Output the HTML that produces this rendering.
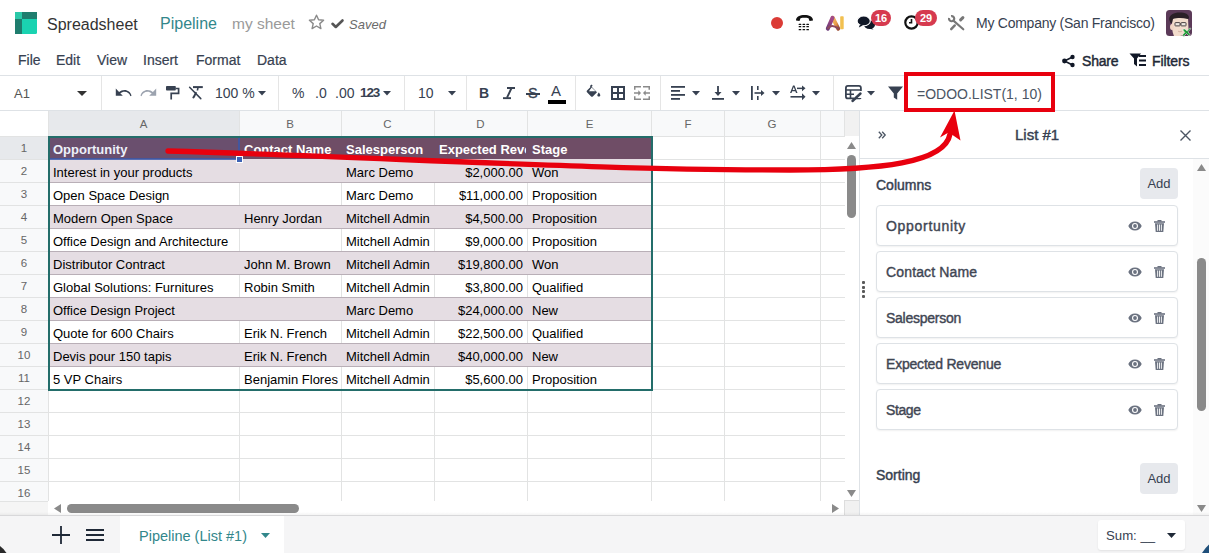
<!DOCTYPE html>
<html><head><meta charset="utf-8">
<style>
*{box-sizing:border-box;margin:0;padding:0}
html,body{width:1209px;height:553px;overflow:hidden;background:#fff;font-family:"Liberation Sans",sans-serif;color:#374151}
.a{position:absolute;white-space:nowrap}
svg{position:absolute;overflow:visible}
/* grid */
#grid{position:absolute;left:0;top:110px;width:860px;height:404px;overflow:hidden;background:#fff}
.ch{position:absolute;top:0;height:26px;background:#f8f9fa;border-right:1px solid #e2e3e3;border-bottom:1px solid #e2e3e3;font-size:12px;color:#666;text-align:center;line-height:26px}
.rh{position:absolute;left:0;width:48px;height:23px;background:#f8f9fa;border-bottom:1px solid #e2e3e3;border-right:1px solid #e2e3e3;font-size:12px;color:#666;text-align:center;line-height:22px}
.row{position:absolute;left:48px;height:23px;width:800px}
.c{position:absolute;top:0;height:23px;border-right:1px solid #e2e3e3;border-bottom:1px solid #e2e3e3;font-size:13px;color:#000;line-height:23px;padding-left:4px;overflow:hidden;white-space:nowrap}
.r{text-align:right;padding-right:4px;padding-left:0}
.hd .c{background:#6e4c65;color:#fff;font-weight:bold;border-right-color:#6e4c65;border-bottom-color:#6e4c65}
.st .c{background:#e5dce2;border-bottom-color:#a89aa5;border-right-color:#e5dce2}
.wt .c{background:#fff;border-bottom-color:#a89aa5}
.panelcard{position:absolute;left:876px;width:302px;height:41px;border:1px solid #dee2e6;border-radius:4px;background:#fff;box-shadow:0 1px 1px rgba(0,0,0,.05)}
.panelcard .t{position:absolute;left:10px;top:0;line-height:40px;font-size:14px;font-weight:bold;color:#374151}
</style></head>
<body>

<!-- ===== NAVBAR ===== -->
<svg style="left:15px;top:12px" width="22" height="22" viewBox="0 0 22 22">
  <rect x="0" y="0" width="22" height="22" rx="1.5" fill="#1ad3b1"/>
  <rect x="7" y="0" width="15" height="7" fill="#1f7d6e"/>
  <rect x="0" y="7" width="7" height="15" fill="#1f7d6e"/>
  <rect x="0" y="0" width="7" height="7" fill="#2bc8a8"/>
</svg>
<div class="a" style="left:47px;top:15px;font-size:16px;color:#333;line-height:20px">Spreadsheet</div>
<div class="a" style="left:160px;top:14px;font-size:16px;color:#32878b;line-height:20px">Pipeline</div>
<div class="a" style="left:232px;top:14px;font-size:15.5px;color:#9a9a9a;line-height:20px">my sheet</div>
<svg style="left:308px;top:14px" width="17" height="16" viewBox="0 0 17 16"><path d="M8.5 1.2 L10.6 5.8 L15.6 6.3 L11.8 9.6 L12.9 14.6 L8.5 12 L4.1 14.6 L5.2 9.6 L1.4 6.3 L6.4 5.8 Z" fill="none" stroke="#8a8a8a" stroke-width="1.4" stroke-linejoin="round"/></svg>
<svg style="left:331px;top:19px" width="13" height="10" viewBox="0 0 13 10"><path d="M1.5 4.8 L4.8 8 L11.5 1.5" fill="none" stroke="#555" stroke-width="2.6" stroke-linecap="round" stroke-linejoin="round"/></svg>
<div class="a" style="left:349px;top:16px;font-size:13px;font-style:italic;color:#6b6b6b;line-height:18px">Saved</div>

<!-- right icons -->
<svg style="left:771px;top:17px" width="12" height="12"><circle cx="6" cy="6" r="6" fill="#db3b36"/></svg>
<svg style="left:795px;top:14px" width="19" height="17" viewBox="0 0 19 17">
  <path d="M1 6.5 C1 2.5 5 1 9.5 1 C14 1 18 2.5 18 6.5 L14.5 7 L13.5 4.2 C11 3.6 8 3.6 5.5 4.2 L4.5 7 Z" fill="#111"/>
  <g fill="#111"><rect x="3.6" y="9.7" width="2.7" height="1.3" rx="0.5"/><rect x="7.5" y="9.7" width="2.7" height="1.3" rx="0.5"/><rect x="11.3" y="9.7" width="2.7" height="1.3" rx="0.5"/><rect x="3.6" y="11.9" width="2.7" height="1.3" rx="0.5"/><rect x="7.5" y="11.9" width="2.7" height="1.3" rx="0.5"/><rect x="11.3" y="11.9" width="2.7" height="1.3" rx="0.5"/><rect x="3.6" y="14.9" width="2.7" height="1.3" rx="0.5"/><rect x="7.5" y="14.9" width="2.7" height="1.3" rx="0.5"/><rect x="11.3" y="14.9" width="2.7" height="1.3" rx="0.5"/></g>
</svg>
<svg style="left:822px;top:12px" width="26" height="22" viewBox="0 0 26 22">
  <defs><linearGradient id="ag1" x1="0" y1="1" x2="0.3" y2="0"><stop offset="0" stop-color="#6b3a7a"/><stop offset="1" stop-color="#a24a86"/></linearGradient>
  <linearGradient id="ag2" x1="0" y1="0" x2="1" y2="1"><stop offset="0" stop-color="#f5c060"/><stop offset="0.6" stop-color="#e89a48"/><stop offset="1" stop-color="#9a4a30"/></linearGradient></defs>
  <path d="M10.8 5.8 L16.2 16.6" stroke="url(#ag2)" stroke-width="4" stroke-linecap="round"/>
  <path d="M5.8 16.6 L10.5 5.8" stroke="url(#ag1)" stroke-width="4" stroke-linecap="round"/>
  <path d="M6 16.2 C8 13.5 12 13.5 16 16.4" fill="none" stroke="#8d4a5e" stroke-width="2.2" stroke-linecap="round"/>
  <rect x="18.2" y="4.3" width="3.5" height="13" rx="0.8" fill="#f2c050"/>
</svg>
<svg style="left:852px;top:10px" width="28" height="24" viewBox="0 0 28 24">
  <ellipse cx="17.5" cy="14.8" rx="5.6" ry="4.2" fill="#111827"/>
  <path d="M19 17.5 L21.5 19.6 L17 18.8Z" fill="#111827"/>
  <ellipse cx="11.7" cy="10.9" rx="6.6" ry="4.9" fill="#111827" stroke="#fff" stroke-width="1.1"/>
  <path d="M8 14.5 L6.8 17.5 L11 15.3Z" fill="#111827"/>
</svg>
<div class="a" style="left:871px;top:10px;width:20px;height:16px;border-radius:8px;background:#d63a4f;color:#fff;font-size:11px;font-weight:bold;text-align:center;line-height:16px">16</div>
<svg style="left:904px;top:15px" width="15" height="15" viewBox="0 0 15 15"><circle cx="7.5" cy="7.5" r="6.2" fill="none" stroke="#111" stroke-width="2.2"/><path d="M7.5 4v3.8H5" fill="none" stroke="#111" stroke-width="1.6"/></svg>
<div class="a" style="left:915px;top:10px;width:22px;height:16px;border-radius:8px;background:#d63a4f;color:#fff;font-size:11px;font-weight:bold;text-align:center;line-height:16px">29</div>
<svg style="left:944px;top:10px" width="26" height="24" viewBox="0 0 26 24">
  <path d="M9.4 10.6 L19.3 19.3" stroke="#777" stroke-width="2.1" stroke-linecap="round"/>
  <path d="M7.1 6.1 A2.6 2.6 0 1 1 5.1 8" fill="none" stroke="#777" stroke-width="2.2"/>
  <path d="M18.9 7.6 L16.6 9.9" stroke="#777" stroke-width="3" stroke-linecap="round"/>
    <path d="M10.8 15.4 L7.2 19.2" stroke="#777" stroke-width="2.4" stroke-linecap="round"/>
</svg>
<div class="a" style="left:976px;top:14px;font-size:14px;letter-spacing:-0.25px;color:#374151;line-height:18px">My Company (San Francisco)</div>
<svg style="left:1166px;top:10px" width="26" height="26" viewBox="0 0 26 26">
  <rect width="26" height="26" rx="3.5" fill="#5b3a58"/>
  <path d="M6.5 8 C11 6.5 18 6.5 22 8 L22.5 19 C21 24.5 16 26 12.5 26 L8 26 C6 22 5.5 15 6.5 8 Z" fill="#f2dccc"/>
  <ellipse cx="6" cy="17" rx="2" ry="3" fill="#f0d4c4"/>
  <path d="M3.2 9.5 C3 4.5 8 2.4 13.5 2.4 C19 2.4 23.5 4 23 8.5 L21.5 9 C17 7.6 11 7.6 7 9 L6 13 L4.5 13 Z" fill="#2a2027"/>
  <rect x="9" y="12.6" width="5" height="3.3" rx="0.5" fill="#eee8e2" stroke="#4a4244" stroke-width="1"/>
  <rect x="15" y="12.6" width="5" height="3.3" rx="0.5" fill="#eee8e2" stroke="#4a4244" stroke-width="1"/>
  <path d="M14 14 H15" stroke="#4a4244" stroke-width="1"/>
  <path d="M12 21 C13 22 15 22 16 21" stroke="#c9a595" stroke-width="0.8" fill="none"/>
  <path d="M16.5 19.5 L18.8 19 L21 21 L23.5 18.2 C24.3 17.6 25 18.2 24.6 19 L22 21.8 L24 24.5 L23 26 L20.5 23.5 L18.5 25.5 L18.5 26.5 L17 26.5 L16.8 24.5 L18.8 22.5Z" fill="#1c9a35" stroke="#fff" stroke-width="0.5"/>
</svg>

<!-- ===== MENU ROW ===== -->
<div class="a" style="left:18px;top:52px;font-size:14px;color:#374151;line-height:16px;-webkit-text-stroke:0.2px #374151">File</div>
<div class="a" style="left:56px;top:52px;font-size:14px;color:#374151;line-height:16px;-webkit-text-stroke:0.2px #374151">Edit</div>
<div class="a" style="left:97px;top:52px;font-size:14px;color:#374151;line-height:16px;-webkit-text-stroke:0.2px #374151">View</div>
<div class="a" style="left:143px;top:52px;font-size:14px;color:#374151;line-height:16px;-webkit-text-stroke:0.2px #374151">Insert</div>
<div class="a" style="left:196px;top:52px;font-size:14px;color:#374151;line-height:16px;-webkit-text-stroke:0.2px #374151">Format</div>
<div class="a" style="left:257px;top:52px;font-size:14px;color:#374151;line-height:16px;-webkit-text-stroke:0.2px #374151">Data</div>

<svg style="left:1062px;top:55px" width="13" height="12" viewBox="0 0 13 12"><circle cx="10.5" cy="2" r="2.2" fill="#111827"/><circle cx="10.5" cy="10" r="2.2" fill="#111827"/><circle cx="2.5" cy="6" r="2.4" fill="#111827"/><path d="M10.5 2L2.5 6L10.5 10" stroke="#111827" stroke-width="1.6" fill="none"/></svg>
<div class="a" style="left:1082px;top:53px;font-size:14px;color:#1f2937;-webkit-text-stroke:0.45px #1f2937;letter-spacing:-0.2px;line-height:16px">Share</div>
<svg style="left:1129px;top:53px" width="18" height="14" viewBox="0 0 18 14"><path d="M0.5 0.5H12L8 5.5V13.5L5 11V5.5Z" fill="#111827"/><rect x="10" y="2" width="7" height="2" fill="#111827"/><rect x="10" y="6.5" width="7" height="2" fill="#111827"/><rect x="10" y="11" width="7" height="2" fill="#111827"/></svg>
<div class="a" style="left:1152px;top:53px;font-size:14px;color:#1f2937;-webkit-text-stroke:0.45px #1f2937;letter-spacing:-0.1px;line-height:16px">Filters</div>

<!-- ===== TOOLBAR ===== -->
<div class="a" style="left:0;top:75px;width:1209px;height:1px;background:#dee2e6"></div>
<div class="a" style="left:0;top:110px;width:1209px;height:1px;background:#dee2e6"></div>
<div class="a" style="left:14px;top:86px;font-size:13px;color:#555;line-height:16px">A1</div>
<svg style="left:77px;top:91px" width="10" height="5"><path d="M0 0H10L5 5Z" fill="#333"/></svg>
<div class="a" style="left:101px;top:76px;width:1px;height:34px;background:#e5e5e5"></div>


<!-- undo/redo/paint/clear -->
<svg style="left:115px;top:88px" width="17" height="9" viewBox="0 0 17 9"><path d="M0.8 0.5 V7.8 H7.8 L5.3 5.3 C6.5 4.3 8 3.7 9.6 3.7 C12.3 3.7 14.6 5.4 15.4 8.2 L16.6 7.6 C15.6 4.1 12.8 1.9 9.6 1.9 C7.4 1.9 5.5 2.7 4.1 4.1 Z" fill="#374151"/></svg>
<svg style="left:140px;top:88px" width="17" height="9" viewBox="0 0 17 9"><g transform="translate(17,0) scale(-1,1)"><path d="M0.8 0.5 V7.8 H7.8 L5.3 5.3 C6.5 4.3 8 3.7 9.6 3.7 C12.3 3.7 14.6 5.4 15.4 8.2 L16.6 7.6 C15.6 4.1 12.8 1.9 9.6 1.9 C7.4 1.9 5.5 2.7 4.1 4.1 Z" fill="#9ca3af"/></g></svg>
<svg style="left:166px;top:86px" width="14" height="14" viewBox="0 0 14 14"><rect x="0" y="0" width="9.8" height="4.6" rx="0.8" fill="#374151"/><path d="M9.6 2.5 H12.6 V7.4 H5.2 V13.6" fill="none" stroke="#374151" stroke-width="1.7"/></svg>
<svg style="left:189px;top:86px" width="14" height="14" viewBox="0 0 14 14"><rect x="4" y="0.1" width="9.8" height="2" fill="#374151"/><path d="M8.1 2 H9.7 L9.2 4.5 H7.6Z" fill="#374151"/><path d="M6.9 6.8 L5.6 9.5 Q4.9 11 4.3 11.5" fill="none" stroke="#374151" stroke-width="1.9" stroke-linecap="round"/><path d="M0.6 1.2 L11.8 12.6" stroke="#374151" stroke-width="1.5" stroke-linecap="round"/></svg>
<div class="a" style="left:215px;top:85px;font-size:14px;color:#374151;line-height:16px">100 %</div>
<svg style="left:258px;top:91px" width="8" height="4.5" viewBox="0 0 8 4.5"><path d="M0 0H8L4 4.5Z" fill="#374151"/></svg>
<div class="a" style="left:278px;top:76px;width:1px;height:34px;background:#e5e5e5"></div>

<div class="a" style="left:292px;top:85px;font-size:14px;color:#374151;line-height:16px">%</div>
<div class="a" style="left:315px;top:85px;font-size:14px;color:#374151;line-height:16px">.0</div>
<div class="a" style="left:335px;top:85px;font-size:14px;color:#374151;line-height:16px">.00</div>
<div class="a" style="left:360px;top:85px;font-size:13.5px;font-weight:bold;color:#374151;line-height:16px;letter-spacing:-1.1px">123</div>
<svg style="left:383px;top:91px" width="8" height="4.5" viewBox="0 0 8 4.5"><path d="M0 0H8L4 4.5Z" fill="#374151"/></svg>
<div class="a" style="left:404px;top:76px;width:1px;height:34px;background:#e5e5e5"></div>
<div class="a" style="left:418px;top:85px;font-size:14px;color:#374151;line-height:16px">10</div>
<svg style="left:448px;top:91px" width="8" height="4.5" viewBox="0 0 8 4.5"><path d="M0 0H8L4 4.5Z" fill="#374151"/></svg>
<div class="a" style="left:466px;top:76px;width:1px;height:34px;background:#e5e5e5"></div>

<div class="a" style="left:479px;top:85px;font-size:14px;font-weight:bold;color:#374151;line-height:16px">B</div>
<svg style="left:502px;top:86px" width="14" height="14" viewBox="0 0 14 14"><rect x="5" y="1" width="8" height="2" fill="#374151"/><rect x="1" y="11.2" width="8" height="1.9" fill="#374151"/><path d="M9.3 2.5 L5 11.6" stroke="#374151" stroke-width="1.9"/></svg>
<div class="a" style="left:528px;top:85px;font-size:14.5px;color:#374151;line-height:16px;-webkit-text-stroke:0.3px #374151">S</div>
<div class="a" style="left:526px;top:93px;width:14px;height:1.8px;background:#374151"></div>
<div class="a" style="left:551px;top:83px;font-size:15px;color:#374151;line-height:16px">A</div>
<div class="a" style="left:548px;top:100px;width:18px;height:4px;background:#000"></div>
<div class="a" style="left:575px;top:76px;width:1px;height:34px;background:#e5e5e5"></div>

<svg style="left:586px;top:84px" width="15" height="13" viewBox="0 0 15 13"><path d="M5.5 0.5 L6.7 1.7 L5.6 2.8 L11 8.2 L6.8 12.4 C6.3 12.9 5.6 12.9 5.1 12.4 L1 8.3 C0.5 7.8 0.5 7.1 1 6.6 L4.5 3.1 L3.9 2.1 Z M3 7.3 H9.6 L5.6 3.6 Z" fill="#374151" fill-rule="evenodd"/><path d="M12.8 8.5 C12.8 8.5 11.3 10.3 11.3 11.2 C11.3 12 12 12.6 12.8 12.6 C13.6 12.6 14.3 12 14.3 11.2 C14.3 10.3 12.8 8.5 12.8 8.5Z" fill="#374151"/></svg>
<svg style="left:611px;top:86px" width="14" height="14" viewBox="0 0 14 14"><rect x="1" y="1" width="12" height="12" fill="none" stroke="#374151" stroke-width="2"/><path d="M7 1V13M1 7H13" stroke="#374151" stroke-width="2"/></svg>
<svg style="left:634px;top:86px" width="16" height="14" viewBox="0 0 16 14"><g fill="none" stroke="#8a8a8a" stroke-width="1.5"><path d="M0.75 3.8V0.75H7M9 0.75H15.25V3.8M0.75 10.2V13.25H7M9 13.25H15.25V10.2M0 7H5M16 7H11"/></g><path d="M4.3 4.3L7 7L4.3 9.7Z M11.7 4.3L9 7L11.7 9.7Z" fill="#8a8a8a"/></svg>
<div class="a" style="left:660px;top:76px;width:1px;height:34px;background:#e5e5e5"></div>

<svg style="left:671px;top:86px" width="14" height="14" viewBox="0 0 14 14" fill="#374151"><rect x="0" y="0" width="14" height="1.8"/><rect x="0" y="4" width="9" height="1.8"/><rect x="0" y="8" width="14" height="1.8"/><rect x="0" y="12" width="9" height="1.8"/></svg>
<svg style="left:692px;top:91px" width="8" height="4.5" viewBox="0 0 8 4.5"><path d="M0 0H8L4 4.5Z" fill="#374151"/></svg>
<svg style="left:712px;top:86px" width="12" height="14" viewBox="0 0 12 14" fill="#374151"><rect x="5.1" y="0" width="1.8" height="7"/><path d="M2.5 6H9.5L6 10Z"/><rect x="0" y="12" width="12" height="1.8"/></svg>
<svg style="left:732px;top:91px" width="8" height="4.5" viewBox="0 0 8 4.5"><path d="M0 0H8L4 4.5Z" fill="#374151"/></svg>
<svg style="left:751px;top:86px" width="14" height="14" viewBox="0 0 14 14" fill="#374151"><rect x="0" y="0" width="1.8" height="14"/><rect x="6" y="0" width="1.6" height="4"/><rect x="6" y="10" width="1.6" height="4"/><rect x="3.5" y="6.2" width="7" height="1.6"/><path d="M10 4L13.5 7L10 10Z"/></svg>
<svg style="left:772px;top:91px" width="8" height="4.5" viewBox="0 0 8 4.5"><path d="M0 0H8L4 4.5Z" fill="#374151"/></svg>
<svg style="left:790px;top:85px" width="16" height="15" viewBox="0 0 16 15" fill="#374151"><path d="M3 0.5 H4.5 L7.5 8 H6 L5.3 6.2 H2.2 L1.5 8 H0 Z M2.6 5 H4.9 L3.75 2Z"/><rect x="7" y="2.6" width="6" height="1.5"/><path d="M12 0.5 L15.5 3.35 L12 6.2Z"/><rect x="0.5" y="11" width="12" height="1.6"/><path d="M12 8.3 L15.5 11.8 L12 15.2Z"/></svg>
<svg style="left:812px;top:91px" width="8" height="4.5" viewBox="0 0 8 4.5"><path d="M0 0H8L4 4.5Z" fill="#374151"/></svg>
<div class="a" style="left:833px;top:76px;width:1px;height:34px;background:#e5e5e5"></div>

<svg style="left:845px;top:85px" width="17" height="17" viewBox="0 0 17 17"><rect x="0.9" y="0.9" width="15" height="12.5" rx="2" fill="none" stroke="#374151" stroke-width="1.8"/><path d="M1 5H16M5.5 5V13.4M1 9.2H10" stroke="#374151" stroke-width="1.6"/><rect x="9" y="6" width="8" height="7" fill="#fff"/><path d="M7.5 16 L15.5 8.5" stroke="#374151" stroke-width="2.4" stroke-linecap="round"/></svg>
<svg style="left:867px;top:91px" width="8" height="4.5" viewBox="0 0 8 4.5"><path d="M0 0H8L4 4.5Z" fill="#374151"/></svg>
<svg style="left:888px;top:86px" width="15" height="14" viewBox="0 0 15 14"><path d="M0 0.5H15L9.2 7.5V13.8L5.8 11.5V7.5Z" fill="#374151"/></svg>
<div class="a" style="left:917px;top:86px;font-size:14px;color:#4b5563;line-height:16px">=ODOO.LIST(1, 10)</div>

<!-- GRID -->
<div class="a" style="left:0;top:111px;width:48px;height:25px;background:#fff"></div>
<div class="a" style="left:48px;top:111px;width:191px;height:25px;background:#e7e9ec;font-size:11.5px;color:#666;text-align:center;line-height:26px">A</div>
<div class="a" style="left:239px;top:111px;width:102px;height:25px;background:#f8f9fa;font-size:11.5px;color:#666;text-align:center;line-height:26px">B</div>
<div class="a" style="left:341px;top:111px;width:93px;height:25px;background:#f8f9fa;font-size:11.5px;color:#666;text-align:center;line-height:26px">C</div>
<div class="a" style="left:434px;top:111px;width:93px;height:25px;background:#f8f9fa;font-size:11.5px;color:#666;text-align:center;line-height:26px">D</div>
<div class="a" style="left:527px;top:111px;width:125px;height:25px;background:#f8f9fa;font-size:11.5px;color:#666;text-align:center;line-height:26px">E</div>
<div class="a" style="left:652px;top:111px;width:72px;height:25px;background:#f8f9fa;font-size:11.5px;color:#666;text-align:center;line-height:26px">F</div>
<div class="a" style="left:724px;top:111px;width:96px;height:25px;background:#f8f9fa;font-size:11.5px;color:#666;text-align:center;line-height:26px">G</div>
<div class="a" style="left:820px;top:111px;width:25px;height:25px;background:#f8f9fa;font-size:11.5px;color:#666;text-align:center;line-height:26px"></div>
<div class="a" style="left:0;top:137px;width:48px;height:22px;background:#e7e9ec;font-size:11.5px;color:#666;text-align:center;line-height:22px">1</div>
<div class="a" style="left:0;top:160px;width:48px;height:22px;background:#f8f9fa;font-size:11.5px;color:#666;text-align:center;line-height:22px">2</div>
<div class="a" style="left:0;top:183px;width:48px;height:22px;background:#f8f9fa;font-size:11.5px;color:#666;text-align:center;line-height:22px">3</div>
<div class="a" style="left:0;top:206px;width:48px;height:22px;background:#f8f9fa;font-size:11.5px;color:#666;text-align:center;line-height:22px">4</div>
<div class="a" style="left:0;top:229px;width:48px;height:22px;background:#f8f9fa;font-size:11.5px;color:#666;text-align:center;line-height:22px">5</div>
<div class="a" style="left:0;top:252px;width:48px;height:22px;background:#f8f9fa;font-size:11.5px;color:#666;text-align:center;line-height:22px">6</div>
<div class="a" style="left:0;top:275px;width:48px;height:22px;background:#f8f9fa;font-size:11.5px;color:#666;text-align:center;line-height:22px">7</div>
<div class="a" style="left:0;top:298px;width:48px;height:22px;background:#f8f9fa;font-size:11.5px;color:#666;text-align:center;line-height:22px">8</div>
<div class="a" style="left:0;top:321px;width:48px;height:22px;background:#f8f9fa;font-size:11.5px;color:#666;text-align:center;line-height:22px">9</div>
<div class="a" style="left:0;top:344px;width:48px;height:22px;background:#f8f9fa;font-size:11.5px;color:#666;text-align:center;line-height:22px">10</div>
<div class="a" style="left:0;top:367px;width:48px;height:22px;background:#f8f9fa;font-size:11.5px;color:#666;text-align:center;line-height:22px">11</div>
<div class="a" style="left:0;top:390px;width:48px;height:22px;background:#f8f9fa;font-size:11.5px;color:#666;text-align:center;line-height:22px">12</div>
<div class="a" style="left:0;top:413px;width:48px;height:22px;background:#f8f9fa;font-size:11.5px;color:#666;text-align:center;line-height:22px">13</div>
<div class="a" style="left:0;top:436px;width:48px;height:22px;background:#f8f9fa;font-size:11.5px;color:#666;text-align:center;line-height:22px">14</div>
<div class="a" style="left:0;top:459px;width:48px;height:22px;background:#f8f9fa;font-size:11.5px;color:#666;text-align:center;line-height:22px">15</div>
<div class="a" style="left:0;top:482px;width:48px;height:22px;background:#f8f9fa;font-size:11.5px;color:#666;text-align:center;line-height:22px">16</div>
<div class="a" style="left:48px;top:136px;width:604px;height:23px;background:#6f4d66"></div>
<div class="a" style="left:48px;top:159px;width:604px;height:23px;background:#e5dde3"></div>
<div class="a" style="left:48px;top:205px;width:604px;height:23px;background:#e5dde3"></div>
<div class="a" style="left:48px;top:251px;width:604px;height:23px;background:#e5dde3"></div>
<div class="a" style="left:48px;top:297px;width:604px;height:23px;background:#e5dde3"></div>
<div class="a" style="left:48px;top:343px;width:604px;height:23px;background:#e5dde3"></div>
<div class="a" style="left:48px;top:111px;width:1px;height:390px;background:#e2e3e3"></div>
<div class="a" style="left:239px;top:111px;width:1px;height:25px;background:#e2e3e3"></div>
<div class="a" style="left:239px;top:390px;width:1px;height:111px;background:#e2e3e3"></div>
<div class="a" style="left:239px;top:182px;width:1px;height:23px;background:#e2e3e3"></div>
<div class="a" style="left:239px;top:228px;width:1px;height:23px;background:#e2e3e3"></div>
<div class="a" style="left:239px;top:274px;width:1px;height:23px;background:#e2e3e3"></div>
<div class="a" style="left:239px;top:320px;width:1px;height:23px;background:#e2e3e3"></div>
<div class="a" style="left:239px;top:366px;width:1px;height:23px;background:#e2e3e3"></div>
<div class="a" style="left:341px;top:111px;width:1px;height:25px;background:#e2e3e3"></div>
<div class="a" style="left:341px;top:390px;width:1px;height:111px;background:#e2e3e3"></div>
<div class="a" style="left:341px;top:182px;width:1px;height:23px;background:#e2e3e3"></div>
<div class="a" style="left:341px;top:228px;width:1px;height:23px;background:#e2e3e3"></div>
<div class="a" style="left:341px;top:274px;width:1px;height:23px;background:#e2e3e3"></div>
<div class="a" style="left:341px;top:320px;width:1px;height:23px;background:#e2e3e3"></div>
<div class="a" style="left:341px;top:366px;width:1px;height:23px;background:#e2e3e3"></div>
<div class="a" style="left:434px;top:111px;width:1px;height:25px;background:#e2e3e3"></div>
<div class="a" style="left:434px;top:390px;width:1px;height:111px;background:#e2e3e3"></div>
<div class="a" style="left:434px;top:182px;width:1px;height:23px;background:#e2e3e3"></div>
<div class="a" style="left:434px;top:228px;width:1px;height:23px;background:#e2e3e3"></div>
<div class="a" style="left:434px;top:274px;width:1px;height:23px;background:#e2e3e3"></div>
<div class="a" style="left:434px;top:320px;width:1px;height:23px;background:#e2e3e3"></div>
<div class="a" style="left:434px;top:366px;width:1px;height:23px;background:#e2e3e3"></div>
<div class="a" style="left:527px;top:111px;width:1px;height:25px;background:#e2e3e3"></div>
<div class="a" style="left:527px;top:390px;width:1px;height:111px;background:#e2e3e3"></div>
<div class="a" style="left:527px;top:182px;width:1px;height:23px;background:#e2e3e3"></div>
<div class="a" style="left:527px;top:228px;width:1px;height:23px;background:#e2e3e3"></div>
<div class="a" style="left:527px;top:274px;width:1px;height:23px;background:#e2e3e3"></div>
<div class="a" style="left:527px;top:320px;width:1px;height:23px;background:#e2e3e3"></div>
<div class="a" style="left:527px;top:366px;width:1px;height:23px;background:#e2e3e3"></div>
<div class="a" style="left:651px;top:111px;width:1px;height:25px;background:#e2e3e3"></div>
<div class="a" style="left:651px;top:136px;width:1px;height:365px;background:#e2e3e3"></div>
<div class="a" style="left:724px;top:111px;width:1px;height:25px;background:#e2e3e3"></div>
<div class="a" style="left:724px;top:136px;width:1px;height:365px;background:#e2e3e3"></div>
<div class="a" style="left:820px;top:111px;width:1px;height:25px;background:#e2e3e3"></div>
<div class="a" style="left:820px;top:136px;width:1px;height:365px;background:#e2e3e3"></div>
<div class="a" style="left:845px;top:111px;width:1px;height:25px;background:#e2e3e3"></div>
<div class="a" style="left:844px;top:111px;width:1px;height:25px;background:#e2e3e3"></div>
<div class="a" style="left:0;top:136px;width:845px;height:1px;background:#e2e3e3"></div>
<div class="a" style="left:0;top:159px;width:48px;height:1px;background:#e2e3e3"></div>
<div class="a" style="left:652px;top:159px;width:193px;height:1px;background:#e2e3e3"></div>
<div class="a" style="left:0;top:182px;width:48px;height:1px;background:#e2e3e3"></div>
<div class="a" style="left:48px;top:182px;width:604px;height:1px;background:#b9afb7"></div>
<div class="a" style="left:652px;top:182px;width:193px;height:1px;background:#e2e3e3"></div>
<div class="a" style="left:0;top:205px;width:48px;height:1px;background:#e2e3e3"></div>
<div class="a" style="left:48px;top:205px;width:604px;height:1px;background:#b9afb7"></div>
<div class="a" style="left:652px;top:205px;width:193px;height:1px;background:#e2e3e3"></div>
<div class="a" style="left:0;top:228px;width:48px;height:1px;background:#e2e3e3"></div>
<div class="a" style="left:48px;top:228px;width:604px;height:1px;background:#b9afb7"></div>
<div class="a" style="left:652px;top:228px;width:193px;height:1px;background:#e2e3e3"></div>
<div class="a" style="left:0;top:251px;width:48px;height:1px;background:#e2e3e3"></div>
<div class="a" style="left:48px;top:251px;width:604px;height:1px;background:#b9afb7"></div>
<div class="a" style="left:652px;top:251px;width:193px;height:1px;background:#e2e3e3"></div>
<div class="a" style="left:0;top:274px;width:48px;height:1px;background:#e2e3e3"></div>
<div class="a" style="left:48px;top:274px;width:604px;height:1px;background:#b9afb7"></div>
<div class="a" style="left:652px;top:274px;width:193px;height:1px;background:#e2e3e3"></div>
<div class="a" style="left:0;top:297px;width:48px;height:1px;background:#e2e3e3"></div>
<div class="a" style="left:48px;top:297px;width:604px;height:1px;background:#b9afb7"></div>
<div class="a" style="left:652px;top:297px;width:193px;height:1px;background:#e2e3e3"></div>
<div class="a" style="left:0;top:320px;width:48px;height:1px;background:#e2e3e3"></div>
<div class="a" style="left:48px;top:320px;width:604px;height:1px;background:#b9afb7"></div>
<div class="a" style="left:652px;top:320px;width:193px;height:1px;background:#e2e3e3"></div>
<div class="a" style="left:0;top:343px;width:48px;height:1px;background:#e2e3e3"></div>
<div class="a" style="left:48px;top:343px;width:604px;height:1px;background:#b9afb7"></div>
<div class="a" style="left:652px;top:343px;width:193px;height:1px;background:#e2e3e3"></div>
<div class="a" style="left:0;top:366px;width:48px;height:1px;background:#e2e3e3"></div>
<div class="a" style="left:48px;top:366px;width:604px;height:1px;background:#b9afb7"></div>
<div class="a" style="left:652px;top:366px;width:193px;height:1px;background:#e2e3e3"></div>
<div class="a" style="left:0;top:389px;width:48px;height:1px;background:#e2e3e3"></div>
<div class="a" style="left:48px;top:389px;width:797px;height:1px;background:#e2e3e3"></div>
<div class="a" style="left:0;top:412px;width:48px;height:1px;background:#e2e3e3"></div>
<div class="a" style="left:48px;top:412px;width:797px;height:1px;background:#e2e3e3"></div>
<div class="a" style="left:0;top:435px;width:48px;height:1px;background:#e2e3e3"></div>
<div class="a" style="left:48px;top:435px;width:797px;height:1px;background:#e2e3e3"></div>
<div class="a" style="left:0;top:458px;width:48px;height:1px;background:#e2e3e3"></div>
<div class="a" style="left:48px;top:458px;width:797px;height:1px;background:#e2e3e3"></div>
<div class="a" style="left:0;top:481px;width:48px;height:1px;background:#e2e3e3"></div>
<div class="a" style="left:48px;top:481px;width:797px;height:1px;background:#e2e3e3"></div>
<div class="a" style="left:0;top:504px;width:48px;height:1px;background:#e2e3e3"></div>
<div class="a" style="left:48px;top:504px;width:797px;height:1px;background:#e2e3e3"></div>
<div class="a" style="left:48px;top:139px;width:190px;height:22px;overflow:hidden;font-size:13px;color:#fff;font-weight:bold;line-height:22px;padding-left:5px">Opportunity</div>
<div class="a" style="left:239px;top:139px;width:101px;height:22px;overflow:hidden;font-size:13px;color:#fff;font-weight:bold;line-height:22px;padding-left:5px">Contact Name</div>
<div class="a" style="left:341px;top:139px;width:92px;height:22px;overflow:hidden;font-size:13px;color:#fff;font-weight:bold;line-height:22px;padding-left:5px">Salesperson</div>
<div class="a" style="left:434px;top:139px;width:92px;height:22px;overflow:hidden;font-size:13px;color:#fff;font-weight:bold;line-height:22px;padding-left:5px">Expected Revenue</div>
<div class="a" style="left:527px;top:139px;width:124px;height:22px;overflow:hidden;font-size:13px;color:#fff;font-weight:bold;line-height:22px;padding-left:5px">Stage</div>
<div class="a" style="left:48px;top:162px;width:190px;height:22px;overflow:hidden;font-size:13px;color:#000;line-height:22px;padding-left:5px">Interest in your products</div>
<div class="a" style="left:341px;top:162px;width:92px;height:22px;overflow:hidden;font-size:13px;color:#000;line-height:22px;padding-left:5px">Marc Demo</div>
<div class="a" style="left:434px;top:162px;width:93px;height:22px;overflow:hidden;font-size:13px;color:#000;line-height:22px;text-align:right;padding-right:4px">$2,000.00</div>
<div class="a" style="left:527px;top:162px;width:124px;height:22px;overflow:hidden;font-size:13px;color:#000;line-height:22px;padding-left:5px">Won</div>
<div class="a" style="left:48px;top:185px;width:190px;height:22px;overflow:hidden;font-size:13px;color:#000;line-height:22px;padding-left:5px">Open Space Design</div>
<div class="a" style="left:341px;top:185px;width:92px;height:22px;overflow:hidden;font-size:13px;color:#000;line-height:22px;padding-left:5px">Marc Demo</div>
<div class="a" style="left:434px;top:185px;width:93px;height:22px;overflow:hidden;font-size:13px;color:#000;line-height:22px;text-align:right;padding-right:4px">$11,000.00</div>
<div class="a" style="left:527px;top:185px;width:124px;height:22px;overflow:hidden;font-size:13px;color:#000;line-height:22px;padding-left:5px">Proposition</div>
<div class="a" style="left:48px;top:208px;width:190px;height:22px;overflow:hidden;font-size:13px;color:#000;line-height:22px;padding-left:5px">Modern Open Space</div>
<div class="a" style="left:239px;top:208px;width:101px;height:22px;overflow:hidden;font-size:13px;color:#000;line-height:22px;padding-left:5px">Henry Jordan</div>
<div class="a" style="left:341px;top:208px;width:92px;height:22px;overflow:hidden;font-size:13px;color:#000;line-height:22px;padding-left:5px">Mitchell Admin</div>
<div class="a" style="left:434px;top:208px;width:93px;height:22px;overflow:hidden;font-size:13px;color:#000;line-height:22px;text-align:right;padding-right:4px">$4,500.00</div>
<div class="a" style="left:527px;top:208px;width:124px;height:22px;overflow:hidden;font-size:13px;color:#000;line-height:22px;padding-left:5px">Proposition</div>
<div class="a" style="left:48px;top:231px;width:190px;height:22px;overflow:hidden;font-size:13px;color:#000;line-height:22px;padding-left:5px">Office Design and Architecture</div>
<div class="a" style="left:341px;top:231px;width:92px;height:22px;overflow:hidden;font-size:13px;color:#000;line-height:22px;padding-left:5px">Mitchell Admin</div>
<div class="a" style="left:434px;top:231px;width:93px;height:22px;overflow:hidden;font-size:13px;color:#000;line-height:22px;text-align:right;padding-right:4px">$9,000.00</div>
<div class="a" style="left:527px;top:231px;width:124px;height:22px;overflow:hidden;font-size:13px;color:#000;line-height:22px;padding-left:5px">Proposition</div>
<div class="a" style="left:48px;top:254px;width:190px;height:22px;overflow:hidden;font-size:13px;color:#000;line-height:22px;padding-left:5px">Distributor Contract</div>
<div class="a" style="left:239px;top:254px;width:101px;height:22px;overflow:hidden;font-size:13px;color:#000;line-height:22px;padding-left:5px">John M. Brown</div>
<div class="a" style="left:341px;top:254px;width:92px;height:22px;overflow:hidden;font-size:13px;color:#000;line-height:22px;padding-left:5px">Mitchell Admin</div>
<div class="a" style="left:434px;top:254px;width:93px;height:22px;overflow:hidden;font-size:13px;color:#000;line-height:22px;text-align:right;padding-right:4px">$19,800.00</div>
<div class="a" style="left:527px;top:254px;width:124px;height:22px;overflow:hidden;font-size:13px;color:#000;line-height:22px;padding-left:5px">Won</div>
<div class="a" style="left:48px;top:277px;width:190px;height:22px;overflow:hidden;font-size:13px;color:#000;line-height:22px;padding-left:5px">Global Solutions: Furnitures</div>
<div class="a" style="left:239px;top:277px;width:101px;height:22px;overflow:hidden;font-size:13px;color:#000;line-height:22px;padding-left:5px">Robin Smith</div>
<div class="a" style="left:341px;top:277px;width:92px;height:22px;overflow:hidden;font-size:13px;color:#000;line-height:22px;padding-left:5px">Mitchell Admin</div>
<div class="a" style="left:434px;top:277px;width:93px;height:22px;overflow:hidden;font-size:13px;color:#000;line-height:22px;text-align:right;padding-right:4px">$3,800.00</div>
<div class="a" style="left:527px;top:277px;width:124px;height:22px;overflow:hidden;font-size:13px;color:#000;line-height:22px;padding-left:5px">Qualified</div>
<div class="a" style="left:48px;top:300px;width:190px;height:22px;overflow:hidden;font-size:13px;color:#000;line-height:22px;padding-left:5px">Office Design Project</div>
<div class="a" style="left:341px;top:300px;width:92px;height:22px;overflow:hidden;font-size:13px;color:#000;line-height:22px;padding-left:5px">Marc Demo</div>
<div class="a" style="left:434px;top:300px;width:93px;height:22px;overflow:hidden;font-size:13px;color:#000;line-height:22px;text-align:right;padding-right:4px">$24,000.00</div>
<div class="a" style="left:527px;top:300px;width:124px;height:22px;overflow:hidden;font-size:13px;color:#000;line-height:22px;padding-left:5px">New</div>
<div class="a" style="left:48px;top:323px;width:190px;height:22px;overflow:hidden;font-size:13px;color:#000;line-height:22px;padding-left:5px">Quote for 600 Chairs</div>
<div class="a" style="left:239px;top:323px;width:101px;height:22px;overflow:hidden;font-size:13px;color:#000;line-height:22px;padding-left:5px">Erik N. French</div>
<div class="a" style="left:341px;top:323px;width:92px;height:22px;overflow:hidden;font-size:13px;color:#000;line-height:22px;padding-left:5px">Mitchell Admin</div>
<div class="a" style="left:434px;top:323px;width:93px;height:22px;overflow:hidden;font-size:13px;color:#000;line-height:22px;text-align:right;padding-right:4px">$22,500.00</div>
<div class="a" style="left:527px;top:323px;width:124px;height:22px;overflow:hidden;font-size:13px;color:#000;line-height:22px;padding-left:5px">Qualified</div>
<div class="a" style="left:48px;top:346px;width:190px;height:22px;overflow:hidden;font-size:13px;color:#000;line-height:22px;padding-left:5px">Devis pour 150 tapis</div>
<div class="a" style="left:239px;top:346px;width:101px;height:22px;overflow:hidden;font-size:13px;color:#000;line-height:22px;padding-left:5px">Erik N. French</div>
<div class="a" style="left:341px;top:346px;width:92px;height:22px;overflow:hidden;font-size:13px;color:#000;line-height:22px;padding-left:5px">Mitchell Admin</div>
<div class="a" style="left:434px;top:346px;width:93px;height:22px;overflow:hidden;font-size:13px;color:#000;line-height:22px;text-align:right;padding-right:4px">$40,000.00</div>
<div class="a" style="left:527px;top:346px;width:124px;height:22px;overflow:hidden;font-size:13px;color:#000;line-height:22px;padding-left:5px">New</div>
<div class="a" style="left:48px;top:369px;width:190px;height:22px;overflow:hidden;font-size:13px;color:#000;line-height:22px;padding-left:5px">5 VP Chairs</div>
<div class="a" style="left:239px;top:369px;width:101px;height:22px;overflow:hidden;font-size:13px;color:#000;line-height:22px;padding-left:5px">Benjamin Flores</div>
<div class="a" style="left:341px;top:369px;width:92px;height:22px;overflow:hidden;font-size:13px;color:#000;line-height:22px;padding-left:5px">Mitchell Admin</div>
<div class="a" style="left:434px;top:369px;width:93px;height:22px;overflow:hidden;font-size:13px;color:#000;line-height:22px;text-align:right;padding-right:4px">$5,600.00</div>
<div class="a" style="left:527px;top:369px;width:124px;height:22px;overflow:hidden;font-size:13px;color:#000;line-height:22px;padding-left:5px">Proposition</div>
<div class="a" style="left:48px;top:136px;width:192px;height:24px;border:2px solid rgba(58,88,170,0.8);background:rgba(50,102,202,0.09)"></div>
<div class="a" style="left:48px;top:136px;width:605px;height:255px;border:2px solid #236d6a"></div>
<div class="a" style="left:236px;top:156px;width:7px;height:7px;background:#3d63b5;border:1px solid #fff"></div>
<div class="a" style="left:0;top:501px;width:48px;height:14px;background:#f5f5f5;border-top:1px solid #e2e3e3"></div>
<div class="a" style="left:48px;top:501px;width:797px;height:14px;background:#fff"></div>
<!-- /GRID -->

<!-- SCROLLBARS -->
<div class="a" style="left:845px;top:111px;width:14px;height:25px;background:#f1f1f1"></div>
<svg style="left:847px;top:142px" width="9" height="7"><path d="M4.5 0L9 7H0Z" fill="#8a8a8a"/></svg>
<div class="a" style="left:847px;top:155px;width:9px;height:63px;border-radius:4.5px;background:#8a8a8a"></div>
<svg style="left:847px;top:490px" width="9" height="7"><path d="M0 0H9L4.5 7Z" fill="#8a8a8a"/></svg>
<div class="a" style="left:844px;top:500px;width:15px;height:15px;background:#f1f1f1;border-left:1px solid #ddd;border-top:1px solid #ddd"></div>
<svg style="left:54px;top:504px" width="7" height="9"><path d="M7 0V9L0 4.5Z" fill="#8a8a8a"/></svg>
<div class="a" style="left:67px;top:504px;width:232px;height:9px;border-radius:4.5px;background:#8a8a8a"></div>
<svg style="left:832px;top:504px" width="7" height="9"><path d="M0 0V9L7 4.5Z" fill="#8a8a8a"/></svg>

<!-- PANEL -->
<div class="a" style="left:859px;top:111px;width:1px;height:404px;background:#dee2e6"></div>
<div class="a" style="left:860px;top:158px;width:349px;height:1px;background:#dee2e6"></div>
<svg style="left:878px;top:131px" width="8" height="8" viewBox="0 0 8 8"><path d="M0.8 0.8L3.8 4L0.8 7.2M4.2 0.8L7.2 4L4.2 7.2" fill="none" stroke="#4b5563" stroke-width="1.3"/></svg>
<div class="a" style="left:1015px;top:126px;font-size:15px;color:#374151;-webkit-text-stroke:0.45px #374151;line-height:18px">List #1</div>
<svg style="left:1180px;top:130px" width="11" height="11" viewBox="0 0 11 11"><path d="M0.5 0.5L10.5 10.5M10.5 0.5L0.5 10.5" stroke="#4b5563" stroke-width="1.4"/></svg>
<div class="a" style="left:876px;top:176px;font-size:14px;color:#374151;-webkit-text-stroke:0.45px #374151;line-height:18px">Columns</div>
<div class="a" style="left:1140px;top:168px;width:38px;height:31px;border-radius:4px;background:#e7e9ed;font-size:13px;color:#374151;text-align:center;line-height:31px">Add</div>
<div class="a" style="left:876px;top:205px;width:302px;height:41px;border:1px solid #dee2e6;border-radius:4px;background:#fff;box-shadow:0 1px 2px rgba(0,0,0,.06)"></div>
<div class="a" style="left:886px;top:217px;font-size:14px;letter-spacing:0.7px;color:#3f4653;-webkit-text-stroke:0.4px #3f4653;line-height:18px">Opportunity</div>
<svg style="left:1128px;top:221px" width="14" height="10" viewBox="0 0 14 10"><path d="M7 0.5C3.8 0.5 1.3 2.6 0.3 5C1.3 7.4 3.8 9.5 7 9.5C10.2 9.5 12.7 7.4 13.7 5C12.7 2.6 10.2 0.5 7 0.5Z" fill="#6b7280"/><circle cx="7" cy="5" r="3" fill="#fff"/><circle cx="7" cy="5" r="1.9" fill="#6b7280"/></svg>
<svg style="left:1154px;top:220px" width="11" height="12" viewBox="0 0 11 12"><rect x="0" y="1.2" width="11" height="1.6" fill="#6b7280"/><rect x="3.5" y="0" width="4" height="1.5" fill="#6b7280"/><path d="M1 3.3H10L9.3 12H1.7Z" fill="#6b7280"/><path d="M3.6 4.5V10.8M5.5 4.5V10.8M7.4 4.5V10.8" stroke="#fff" stroke-width="0.9"/></svg>
<div class="a" style="left:876px;top:251px;width:302px;height:41px;border:1px solid #dee2e6;border-radius:4px;background:#fff;box-shadow:0 1px 2px rgba(0,0,0,.06)"></div>
<div class="a" style="left:886px;top:263px;font-size:14px;letter-spacing:0.15px;color:#3f4653;-webkit-text-stroke:0.4px #3f4653;line-height:18px">Contact Name</div>
<svg style="left:1128px;top:267px" width="14" height="10" viewBox="0 0 14 10"><path d="M7 0.5C3.8 0.5 1.3 2.6 0.3 5C1.3 7.4 3.8 9.5 7 9.5C10.2 9.5 12.7 7.4 13.7 5C12.7 2.6 10.2 0.5 7 0.5Z" fill="#6b7280"/><circle cx="7" cy="5" r="3" fill="#fff"/><circle cx="7" cy="5" r="1.9" fill="#6b7280"/></svg>
<svg style="left:1154px;top:266px" width="11" height="12" viewBox="0 0 11 12"><rect x="0" y="1.2" width="11" height="1.6" fill="#6b7280"/><rect x="3.5" y="0" width="4" height="1.5" fill="#6b7280"/><path d="M1 3.3H10L9.3 12H1.7Z" fill="#6b7280"/><path d="M3.6 4.5V10.8M5.5 4.5V10.8M7.4 4.5V10.8" stroke="#fff" stroke-width="0.9"/></svg>
<div class="a" style="left:876px;top:297px;width:302px;height:41px;border:1px solid #dee2e6;border-radius:4px;background:#fff;box-shadow:0 1px 2px rgba(0,0,0,.06)"></div>
<div class="a" style="left:886px;top:309px;font-size:14px;letter-spacing:-0.25px;color:#3f4653;-webkit-text-stroke:0.4px #3f4653;line-height:18px">Salesperson</div>
<svg style="left:1128px;top:313px" width="14" height="10" viewBox="0 0 14 10"><path d="M7 0.5C3.8 0.5 1.3 2.6 0.3 5C1.3 7.4 3.8 9.5 7 9.5C10.2 9.5 12.7 7.4 13.7 5C12.7 2.6 10.2 0.5 7 0.5Z" fill="#6b7280"/><circle cx="7" cy="5" r="3" fill="#fff"/><circle cx="7" cy="5" r="1.9" fill="#6b7280"/></svg>
<svg style="left:1154px;top:312px" width="11" height="12" viewBox="0 0 11 12"><rect x="0" y="1.2" width="11" height="1.6" fill="#6b7280"/><rect x="3.5" y="0" width="4" height="1.5" fill="#6b7280"/><path d="M1 3.3H10L9.3 12H1.7Z" fill="#6b7280"/><path d="M3.6 4.5V10.8M5.5 4.5V10.8M7.4 4.5V10.8" stroke="#fff" stroke-width="0.9"/></svg>
<div class="a" style="left:876px;top:343px;width:302px;height:41px;border:1px solid #dee2e6;border-radius:4px;background:#fff;box-shadow:0 1px 2px rgba(0,0,0,.06)"></div>
<div class="a" style="left:886px;top:355px;font-size:14px;letter-spacing:-0.2px;color:#3f4653;-webkit-text-stroke:0.4px #3f4653;line-height:18px">Expected Revenue</div>
<svg style="left:1128px;top:359px" width="14" height="10" viewBox="0 0 14 10"><path d="M7 0.5C3.8 0.5 1.3 2.6 0.3 5C1.3 7.4 3.8 9.5 7 9.5C10.2 9.5 12.7 7.4 13.7 5C12.7 2.6 10.2 0.5 7 0.5Z" fill="#6b7280"/><circle cx="7" cy="5" r="3" fill="#fff"/><circle cx="7" cy="5" r="1.9" fill="#6b7280"/></svg>
<svg style="left:1154px;top:358px" width="11" height="12" viewBox="0 0 11 12"><rect x="0" y="1.2" width="11" height="1.6" fill="#6b7280"/><rect x="3.5" y="0" width="4" height="1.5" fill="#6b7280"/><path d="M1 3.3H10L9.3 12H1.7Z" fill="#6b7280"/><path d="M3.6 4.5V10.8M5.5 4.5V10.8M7.4 4.5V10.8" stroke="#fff" stroke-width="0.9"/></svg>
<div class="a" style="left:876px;top:389px;width:302px;height:41px;border:1px solid #dee2e6;border-radius:4px;background:#fff;box-shadow:0 1px 2px rgba(0,0,0,.06)"></div>
<div class="a" style="left:886px;top:401px;font-size:14px;letter-spacing:-0.4px;color:#3f4653;-webkit-text-stroke:0.4px #3f4653;line-height:18px">Stage</div>
<svg style="left:1128px;top:405px" width="14" height="10" viewBox="0 0 14 10"><path d="M7 0.5C3.8 0.5 1.3 2.6 0.3 5C1.3 7.4 3.8 9.5 7 9.5C10.2 9.5 12.7 7.4 13.7 5C12.7 2.6 10.2 0.5 7 0.5Z" fill="#6b7280"/><circle cx="7" cy="5" r="3" fill="#fff"/><circle cx="7" cy="5" r="1.9" fill="#6b7280"/></svg>
<svg style="left:1154px;top:404px" width="11" height="12" viewBox="0 0 11 12"><rect x="0" y="1.2" width="11" height="1.6" fill="#6b7280"/><rect x="3.5" y="0" width="4" height="1.5" fill="#6b7280"/><path d="M1 3.3H10L9.3 12H1.7Z" fill="#6b7280"/><path d="M3.6 4.5V10.8M5.5 4.5V10.8M7.4 4.5V10.8" stroke="#fff" stroke-width="0.9"/></svg>

<div class="a" style="left:876px;top:466px;font-size:14px;color:#374151;-webkit-text-stroke:0.45px #374151;line-height:18px">Sorting</div>
<div class="a" style="left:1140px;top:463px;width:38px;height:31px;border-radius:4px;background:#e7e9ed;font-size:13px;color:#374151;text-align:center;line-height:31px">Add</div>
<div class="a" style="left:1193px;top:159px;width:16px;height:356px;background:#fbfbfb"></div>
<svg style="left:1197px;top:164px" width="9" height="7"><path d="M4.5 0L9 7H0Z" fill="#8a8a8a"/></svg>
<div class="a" style="left:1197px;top:258px;width:9px;height:153px;border-radius:4.5px;background:#8a8a8a"></div>
<svg style="left:1197px;top:505px" width="9" height="7"><path d="M0 0H9L4.5 7Z" fill="#8a8a8a"/></svg>
<!-- resize dots -->
<div class="a" style="left:862.3px;top:281px;width:3px;height:3px;border-radius:1px;background:#5a5a5a"></div>
<div class="a" style="left:862.3px;top:285.7px;width:3px;height:3px;border-radius:1px;background:#5a5a5a"></div>
<div class="a" style="left:862.3px;top:290.4px;width:3px;height:3px;border-radius:1px;background:#5a5a5a"></div>
<div class="a" style="left:862.3px;top:295px;width:3px;height:3px;border-radius:1px;background:#5a5a5a"></div>

<!-- BOTTOM BAR -->
<div class="a" style="left:0;top:512px;width:1209px;height:4px;background:linear-gradient(rgba(0,0,0,0),rgba(0,0,0,0.06))"></div>
<div class="a" style="left:0;top:515px;width:1209px;height:38px;background:#f5f5f6;border-top:1px solid #d8d8da"></div>
<svg style="left:52px;top:526px" width="18" height="18"><path d="M9 0V18M0 9H18" stroke="#1f2937" stroke-width="1.8"/></svg>
<svg style="left:86px;top:529px" width="18" height="12"><path d="M0 1H18M0 6H18M0 11H18" stroke="#1f2937" stroke-width="1.8"/></svg>
<div class="a" style="left:120px;top:516px;width:164px;height:37px;background:#fff"></div>
<div class="a" style="left:139px;top:527px;font-size:14.5px;color:#32878b;line-height:18px">Pipeline (List #1)</div>
<svg style="left:261px;top:533px" width="9" height="5"><path d="M0 0H9L4.5 5Z" fill="#32878b"/></svg>
<div class="a" style="left:1098px;top:520px;width:87px;height:30px;background:#fff;border-radius:3px;box-shadow:0 1px 2px rgba(0,0,0,.08)"></div>
<div class="a" style="left:1106px;top:527px;font-size:13.2px;color:#374151;line-height:18px">Sum: __</div>
<svg style="left:1167px;top:533px" width="9" height="5"><path d="M0 0H9L4.5 5Z" fill="#1f2937"/></svg>

<svg style="left:0;top:543px" width="10" height="10" viewBox="0 0 10 10"><path d="M0 3 Q3 5 6.5 10 H0Z" fill="#2a2a2a"/></svg>
<svg style="left:1199px;top:543px" width="10" height="10" viewBox="0 0 10 10"><path d="M10 1.5 Q6 5 3 10 H10Z" fill="#1f4f7a"/></svg>
<!-- RED ANNOTATION -->
<div class="a" style="left:904px;top:72px;width:151px;height:40px;border:4.5px solid #e8000e"></div>
<svg style="left:0;top:0" width="1209" height="553" viewBox="0 0 1209 553">
  <path d="M168 151 C 400 158, 600 170, 790 170 C 880 170, 945 163, 950 134" fill="none" stroke="#e8000e" stroke-width="5.3" stroke-linecap="round"/>
  <path d="M954.5 110.5 L960.5 140.5 L952.5 135 L948.5 132.5 L940 137.5 Z" fill="#e8000e"/>
</svg>

</body></html>
